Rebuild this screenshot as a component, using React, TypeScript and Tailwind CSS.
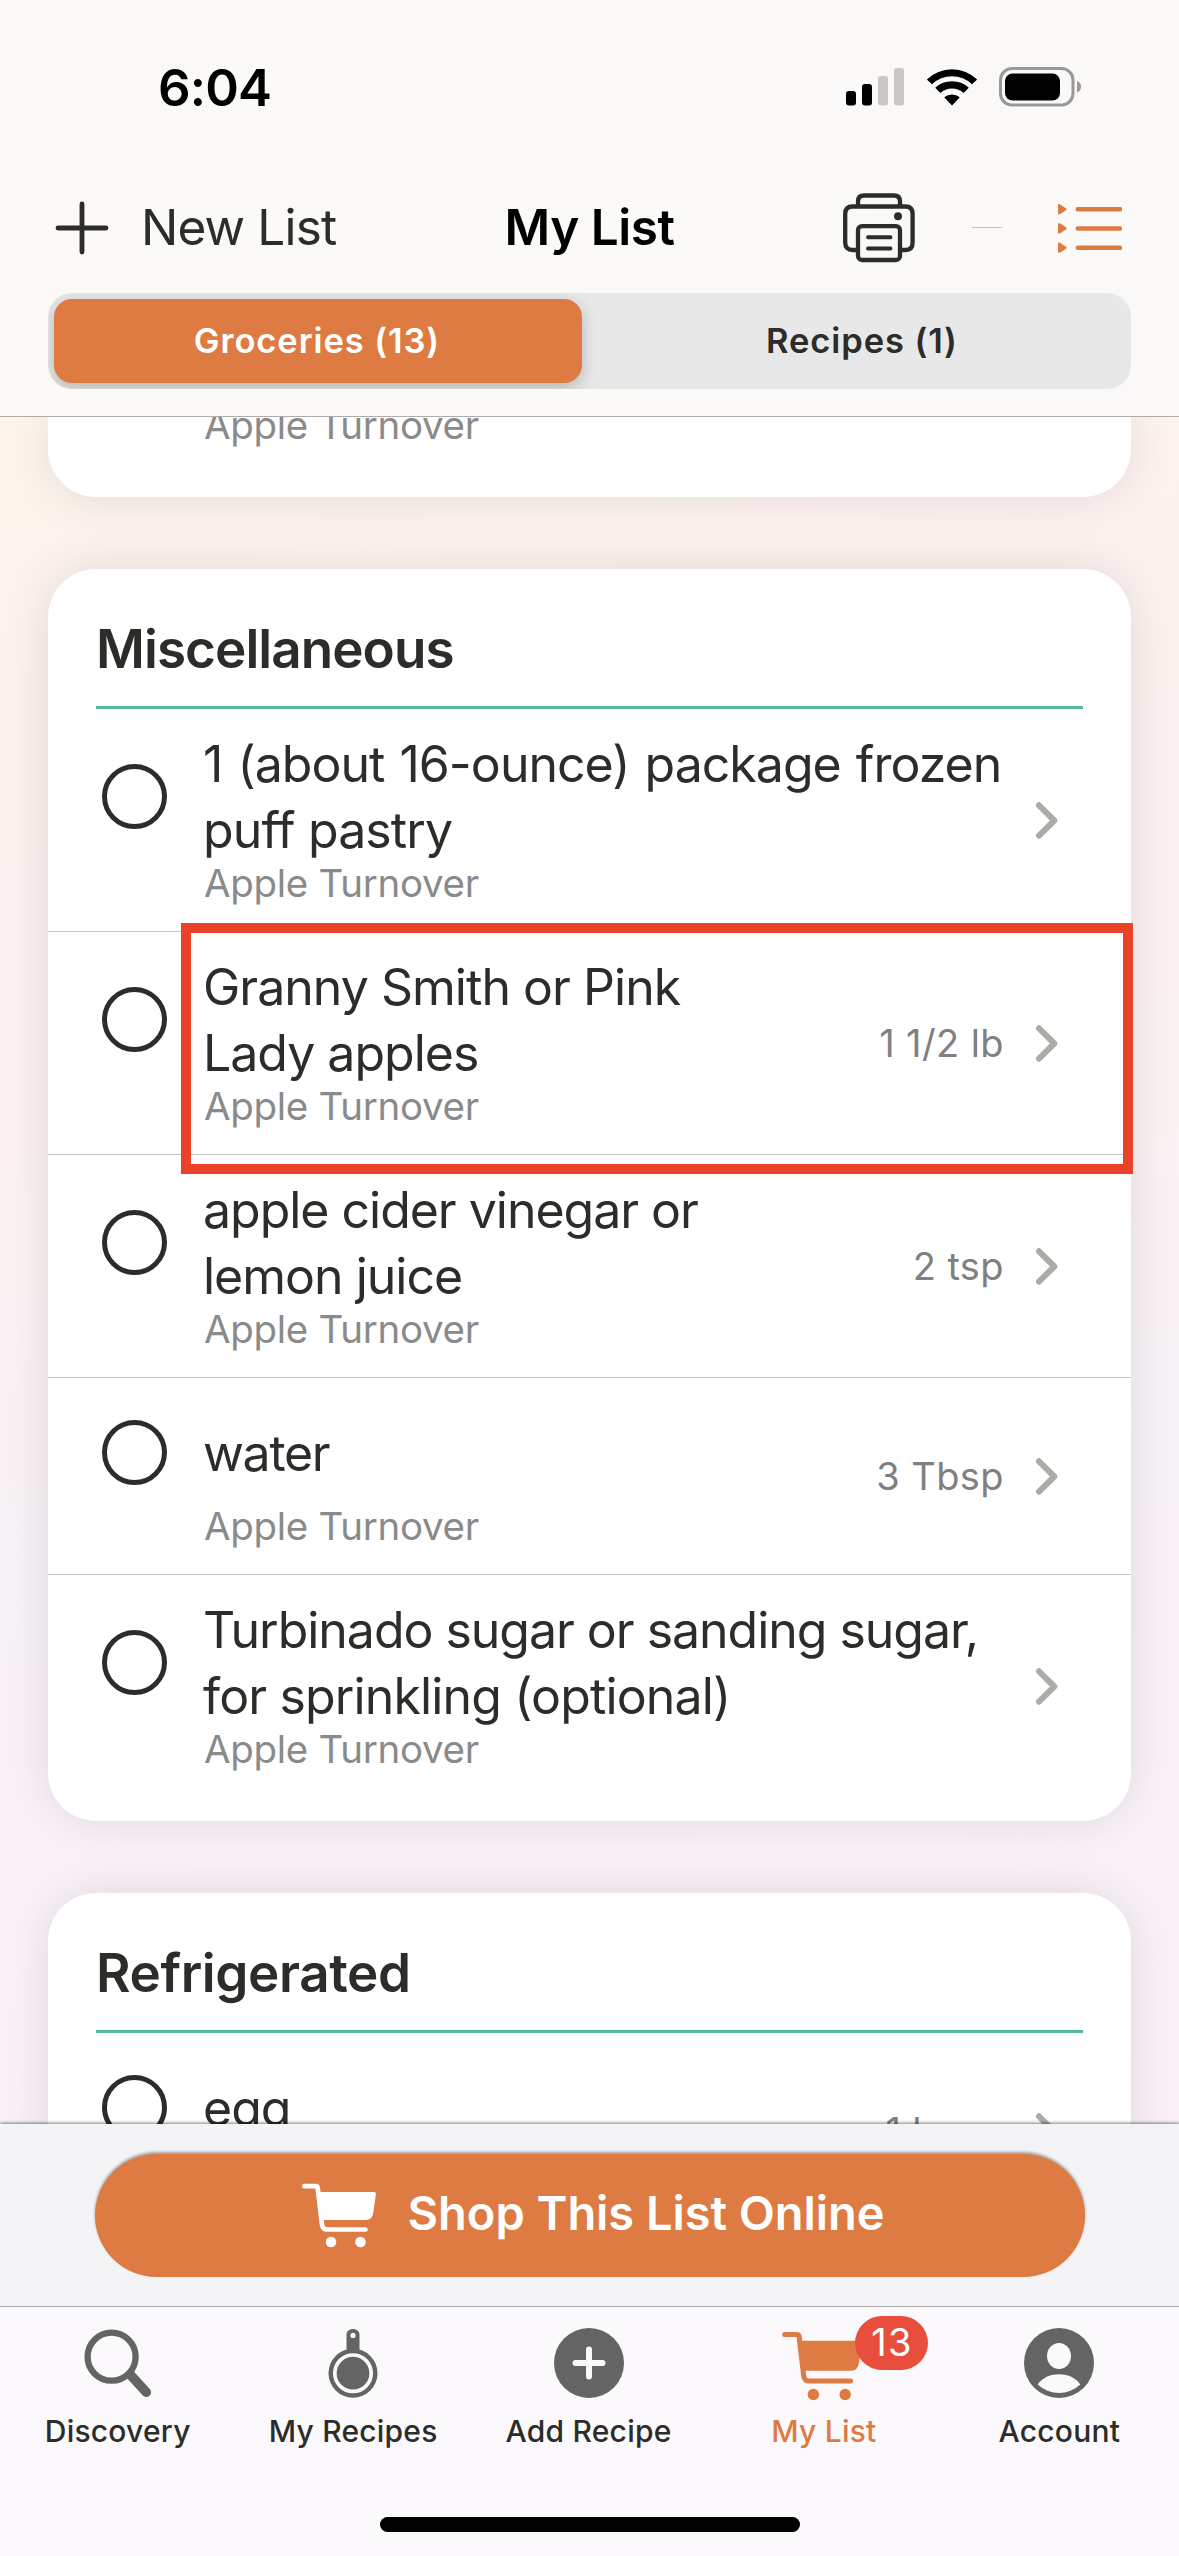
import type { ReactNode } from "react";

type Line = { text: string; tracking: string };
type Item = { lines: Line[]; qty?: string; highlighted?: boolean };

const MISC: Item[] = [
  {
    lines: [
      { text: "1 (about 16-ounce) package frozen", tracking: "tracking-[-0.98px] [word-spacing:2px]" },
      { text: "puff pastry", tracking: "tracking-[-0.88px]" },
    ],
  },
  {
    lines: [
      { text: "Granny Smith or Pink", tracking: "tracking-[-0.97px]" },
      { text: "Lady apples", tracking: "tracking-[-1px]" },
    ],
    qty: "1 1/2 lb",
    highlighted: true,
  },
  {
    lines: [
      { text: "apple cider vinegar or", tracking: "tracking-[-1.02px]" },
      { text: "lemon juice", tracking: "tracking-[-1px]" },
    ],
    qty: "2 tsp",
  },
  { lines: [{ text: "water", tracking: "tracking-[-1.3px]" }], qty: "3 Tbsp" },
  {
    lines: [
      { text: "Turbinado sugar or sanding sugar,", tracking: "tracking-[-1.03px]" },
      { text: "for sprinkling (optional)", tracking: "tracking-[-0.86px]" },
    ],
  },
];

const COLD: Item[] = [{ lines: [{ text: "egg", tracking: "tracking-[-1px]" }], qty: "1 large" }];

function StatusIcons() {
  return (
    <div className="flex items-start pt-[13px]">
      <svg width="58" height="38" viewBox="0 0 58 38">
        <rect x="0" y="23" width="10" height="14.5" rx="3" fill="#000" />
        <rect x="16" y="16" width="10" height="21.5" rx="3" fill="#000" />
        <rect x="32" y="8" width="10" height="29.5" rx="3" fill="#c8c7c5" />
        <rect x="48" y="0" width="10" height="37.5" rx="3" fill="#c8c7c5" />
      </svg>
      <svg className="ml-[22px]" width="52" height="38" viewBox="0 0 52 38">
        <path d="M0.8 11.6A36 36 0 0 1 51.2 11.6L46 16.2A29 29 0 0 0 6 16.2Z" fill="#000" />
        <path d="M9.2 19.8A24.5 24.5 0 0 1 42.8 19.8L37.6 25A17 17 0 0 0 14.4 25Z" fill="#000" />
        <path d="M18.2 29.2A12.5 12.5 0 0 1 33.8 29.2L26 37.4Z" fill="#000" />
      </svg>
      <svg className="-mt-px ml-[21px]" width="83" height="40" viewBox="0 0 83 40">
        <rect x="1.5" y="1.5" width="72.5" height="36.5" rx="11.5" fill="none" stroke="#9a9998" strokeWidth="3" />
        <rect x="6" y="6.5" width="55" height="27" rx="7.5" fill="#000" />
        <path d="M78 14C83.400 16 83.400 23.500 78 25.500Z" fill="#9a9998" />
      </svg>
    </div>
  );
}

function PrinterIcon() {
  return (
    <svg width="72" height="70" viewBox="0 0 72 70" fill="none" stroke="#2c2c28" strokeWidth="4.3">
      <path d="M15 13V8.500Q15 2.500 21 2.500H51Q57 2.500 57 8.500V13" />
      <path d="M15 57H9.500Q2.200 57 2.200 49.500V21Q2.200 13.500 9.500 13.500H62.500Q69.600 13.500 69.600 21V49.500Q69.600 57 62.500 57H57" />
      <rect x="15" y="33.200" width="42" height="33.800" rx="4" />
      <path d="M25 44.200H47.500M25 55.500H47.500" strokeWidth="3.900" strokeLinecap="round" />
      <circle cx="55" cy="23.300" r="4" fill="#2c2c28" stroke="none" />
    </svg>
  );
}

function ListIcon() {
  return (
    <svg width="64" height="50" viewBox="0 0 64 50" fill="#dd7b43" stroke="#dd7b43">
      {[6.2, 25.4, 44.7].map((y) => (
        <g key={y} transform={`translate(0 ${y})`}>
          <path d="M0 -5Q1.500 -5.400 3 -4.300L8.300 -0.800Q9.300 0 8.300 0.800L3 4.300Q1.500 5.400 0 5Z" stroke="none" />
          <path d="M19.800 0H62" strokeWidth="4.500" strokeLinecap="round" />
        </g>
      ))}
    </svg>
  );
}

function CartIcon({ className }: { className: string }) {
  return (
    <svg className={className} viewBox="0 0 76 65" fill="currentColor">
      <path
        d="M3.300 3.200H14.800Q16.500 3.200 16.700 5L21 41.500Q21.700 46.500 26 46.500H64.500"
        fill="none"
        stroke="currentColor"
        strokeWidth="4.700"
        strokeLinecap="round"
      />
      <path d="M18 9H73Q75.100 9 74.900 11L72.300 29.500Q71.300 37 65 37H21.500Z" />
      <circle cx="30" cy="59" r="5.300" />
      <circle cx="59.500" cy="59" r="5.300" />
    </svg>
  );
}

function Chevron() {
  return (
    <svg className="ml-[32px]" width="22" height="37" viewBox="0 0 22 37" fill="none">
      <path d="M3 3.300L18.300 18.500L3 33.700" stroke="#acaba6" strokeWidth="6" strokeLinecap="round" strokeLinejoin="round" />
    </svg>
  );
}

function Row({ item, first }: { item: Item; first: boolean }) {
  const single = item.lines.length === 1;
  return (
    <li
      className={`relative flex border-t pr-[73px] pl-[54px] ${single ? "h-[197px]" : "h-[223px]"} ${
        first ? "border-transparent" : "border-[#c4c5c4]"
      }`}
    >
      <span
        className={`size-[65px] shrink-0 rounded-full border-5 border-[#2c2c28] ${single ? "mt-[42px]" : "mt-[55px]"}`}
      />
      <div className={`ml-[36px] flex-1 whitespace-nowrap ${single ? "pt-[42px]" : "pt-[22px]"}`}>
        {item.lines.map((l) => (
          <p key={l.text} className={`text-[50px] leading-[66px] text-[#2c2c28] ${l.tracking}`}>
            {l.text}
          </p>
        ))}
        <Source className={single ? "mt-[20px]" : ""} />
      </div>
      <div className="flex items-center">
        <span className="text-[38px] tracking-[0.4px] text-[#808080]">{item.qty}</span>
        <Chevron />
      </div>
      {item.highlighted && (
        <div className="pointer-events-none absolute -top-[9px] left-[133px] z-10 h-[251px] w-[952px] border-10 border-[#ea4226]" />
      )}
    </li>
  );
}

function Source({ className = "" }: { className?: string }) {
  return (
    <p className={`pl-[1px] text-[38.5px] leading-[40px] tracking-[-0.3px] text-[#8a8a8a] ${className}`}>Apple Turnover</p>
  );
}

function Card({ title, tracking, items }: { title: string; tracking: string; items: Item[] }) {
  return (
    <section className="mt-[72px] rounded-[48px] bg-white pt-[48px] pb-[24px] shadow-[0_0_50px_rgba(0,0,0,0.11)]">
      <h2 className={`pl-[48px] text-[53px] leading-[64px] font-semibold text-[#2c2c28] ${tracking}`}>{title}</h2>
      <div className="mt-[25px] mr-[48px] ml-[48px] h-[3px] bg-[#57b894]" />
      <ul className="-mt-px">
        {items.map((it, i) => (
          <Row key={it.lines[0].text} item={it} first={i === 0} />
        ))}
      </ul>
    </section>
  );
}

function Tab({ label, active, children }: { label: string; active?: boolean; children: ReactNode }) {
  return (
    <div className={`flex flex-1 flex-col items-center pt-[21px] ${active ? "text-[#dd7b43]" : "text-[#2c2c28]"}`}>
      <div className="flex h-[70px] items-start justify-center">{children}</div>
      <span className="mt-[15px] text-[30px] leading-[36px] font-medium tracking-[0.22px]">{label}</span>
    </div>
  );
}

export default function App() {
  return (
    <div className="flex h-[2556px] w-[1179px] flex-col overflow-hidden font-['Inter',sans-serif]">
      <header className="h-[417px] shrink-0 border-b border-[#adacab] bg-linear-to-r from-[#fcf9f6] via-[#fbfaf7] to-[#fbf9f8]">
        <div className="flex h-[176px] items-start justify-between pt-[55px] pr-[97px] pl-[158px]">
          <span className="pt-px text-[51px] leading-[64px] font-semibold tracking-[-0.84px] text-black">6:04</span>
          <StatusIcons />
        </div>
        <div className="grid h-[103px] grid-cols-[1fr_auto_1fr] items-center">
          <div className="flex items-center pl-[55px]">
            <svg width="54" height="54" viewBox="0 0 54 54">
              <path d="M27 3V51M3 27H51" stroke="#2c2c28" strokeWidth="4.800" strokeLinecap="round" />
            </svg>
            <span className="ml-[32px] pb-px text-[49.5px] leading-[60px] tracking-[-0.83px] text-[#2c2c28]">New List</span>
          </div>
          <h1 className="pb-px text-[49.5px] leading-[60px] font-semibold tracking-[-0.5px] text-black">My List</h1>
          <div className="flex items-center justify-end pr-[57px]">
            <PrinterIcon />
            <span className="mr-[56px] ml-[57px] h-px w-[30px] bg-[#c3c2c0]" />
            <ListIcon />
          </div>
        </div>
        <div className="mx-[48px] mt-[14px] flex h-[96px] overflow-hidden rounded-[24px] bg-[#e9e8e8] p-[6px] text-[34.5px] font-semibold tracking-[0.9px]">
          <div className="flex w-[528px] items-center justify-center rounded-[18px] bg-[#dd7b43] pr-[2px] pb-px text-white shadow-[0_5px_16px_rgba(0,0,0,0.22)]">
            Groceries (13)
          </div>
          <div className="ml-[17px] flex flex-1 items-center justify-center pb-px text-[#2c2c28]">Recipes (1)</div>
        </div>
      </header>

      <main className="h-[1707px] shrink-0 overflow-hidden bg-[linear-gradient(172deg,#fef5ec_0%,#fdf2f0_14%,#fcf2f2_40%,#f8f3f7_62%,#f9f2f9_82%,#fbf1f8_100%)] px-[48px]">
        <section className="flex h-[80px] flex-col justify-end rounded-b-[48px] bg-white pb-[52px] pl-[155px] shadow-[0_0_50px_rgba(0,0,0,0.11)]">
          <Source className="shrink-0" />
        </section>
        <Card title="Miscellaneous" tracking="tracking-[-0.94px]" items={MISC} />
        <Card title="Refrigerated" tracking="tracking-[-0.39px]" items={COLD} />
      </main>

      <div className="relative flex h-[182px] shrink-0 justify-center bg-[#f4f3f6] pt-[30px] shadow-[0_-1px_3px_rgba(0,0,0,0.5)]">
        <button className="flex h-[123px] w-[990px] items-center justify-center rounded-full bg-[#dd7b43] pl-[6px] text-white shadow-[0_-2px_3px_rgba(0,0,0,0.35)]">
          <CartIcon className="h-[65px] w-[76px]" />
          <span className="ml-[31px] pb-[5px] text-[47px] leading-[60px] font-semibold tracking-[-0.06px]">
            Shop This List Online
          </span>
        </button>
      </div>

      <footer className="relative flex flex-1 flex-col border-t border-[#a9a8aa] bg-[#fbf9fb]">
        <nav className="flex w-[1177px]">
          <Tab label="Discovery">
            <svg width="70" height="70" viewBox="0 0 70 70" fill="none" stroke="#646464">
              <circle cx="28.600" cy="28.700" r="24" strokeWidth="6.300" />
              <path d="M48 47.500L63.300 64.200" strokeWidth="9.500" strokeLinecap="round" />
            </svg>
          </Tab>
          <Tab label="My Recipes">
            <svg width="70" height="70" viewBox="0 0 70 70">
              <path d="M28.500 24V7.500Q28.500 1 35 1T41.500 7.500V24Z" fill="#646464" />
              <circle cx="35" cy="45.200" r="24.500" fill="#646464" />
              <circle cx="35" cy="45.200" r="18.200" fill="none" stroke="#fbf9fb" strokeWidth="3.700" />
              <circle cx="35" cy="7.400" r="2.600" fill="#fbf9fb" />
            </svg>
          </Tab>
          <Tab label="Add Recipe">
            <svg width="70" height="70" viewBox="0 0 70 70">
              <circle cx="35" cy="35" r="35" fill="#646464" />
              <path d="M35 21.500V48.500M21.500 35H48.500" stroke="#fbf9fb" strokeWidth="6" strokeLinecap="round" />
            </svg>
          </Tab>
          <Tab label="My List" active>
            <div className="relative -ml-[3px] pt-[3px]">
              <CartIcon className="h-[70px] w-[82px]" />
              <span className="absolute -top-[12px] left-[74px] flex h-[54px] w-[73px] items-center justify-center rounded-full bg-[#e94e3d] pb-px text-[38px] tracking-[1.2px] text-white">
                13
              </span>
            </div>
          </Tab>
          <Tab label="Account">
            <svg width="70" height="70" viewBox="0 0 70 70">
              <circle cx="35" cy="35" r="35" fill="#646464" />
              <ellipse cx="35" cy="28" rx="12" ry="13" fill="#fbf9fb" />
              <path d="M13.700 56.500C19 49 27 46.300 35 46.300S51 49 56.300 56.500A31 31 0 0 1 13.700 56.500Z" fill="#fbf9fb" />
            </svg>
          </Tab>
        </nav>
        <div className="mx-auto mt-auto mb-[24px] h-[15px] w-[420px] rounded-full bg-black" />
      </footer>
    </div>
  );
}
